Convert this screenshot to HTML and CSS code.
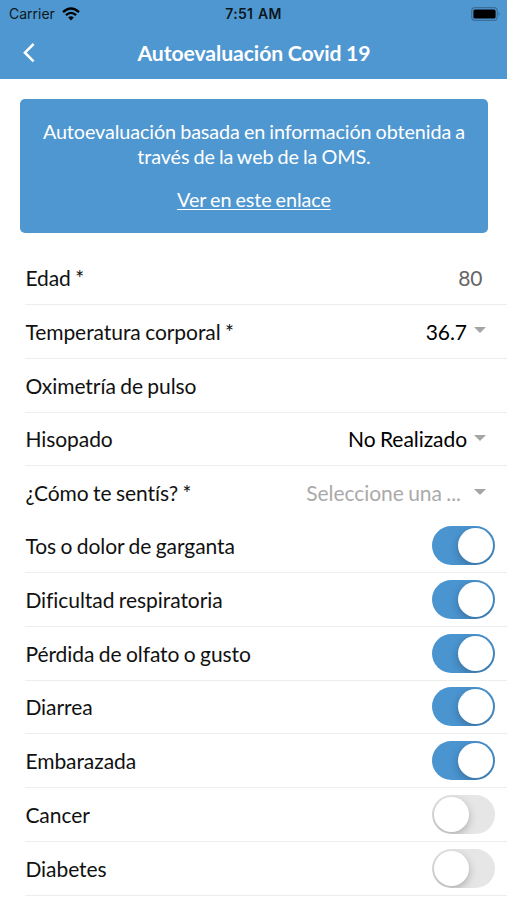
FILE: index.html
```html
<!DOCTYPE html>
<html lang="es">
<head>
<meta charset="UTF-8" />
<meta name="viewport" content="width=device-width, initial-scale=1" />
<title>Autoevaluación Covid 19</title>
<link rel="stylesheet" href="styles.css">
</head>
<body>
<header>
  <div class="status-bar">
    <div class="carrier">
      <span>Carrier</span>
      <svg class="wifi" viewBox="0 0 18 14" width="18" height="14">
        <path d="M1 5.2 Q9 -2.2 17 5.2" fill="none" stroke="#000" stroke-width="2.4" />
        <path d="M3.9 8.2 Q9 3.6 14.1 8.2" fill="none" stroke="#000" stroke-width="2.3" />
        <path d="M6.2 10.4 Q9 8 11.8 10.4 L9 13.4 Z" fill="#000" />
      </svg>
    </div>
    <span class="time">7:51 AM</span>
    <svg class="battery" viewBox="0 0 30 14" width="30" height="14">
      <rect x="0.7" y="0.7" width="25.6" height="12.6" rx="3.4" fill="none" stroke="#3b6f9b" stroke-width="1.2" />
      <rect x="2.4" y="2.4" width="22.2" height="9.2" rx="1.6" fill="#000" />
      <path d="M27.6 5 Q30.2 7 27.6 9 Z" fill="#3b6f9b" />
    </svg>
  </div>
  <div class="toolbar">
    <svg class="back" viewBox="0 0 14 22" width="14" height="22">
      <path d="M11.6 2 L2.9 10.7 L11.6 19.4" fill="none" stroke="#fff" stroke-width="2.5" />
    </svg>
    <h1>Autoevaluación Covid 19</h1>
  </div>
</header>

<main>
  <section class="info">
    <p>Autoevaluación basada en información obtenida a través de la web de la OMS.</p>
    <a href="#">Ver en este enlace</a>
  </section>

  <div class="list">
    <div class="item">
      <label>Edad *</label>
      <span class="value input">80</span>
    </div>
    <div class="item">
      <label>Temperatura corporal *</label>
      <span class="value select">36.7</span>
    </div>
    <div class="item">
      <label>Oximetría de pulso</label>
    </div>
    <div class="item">
      <label>Hisopado</label>
      <span class="value select">No Realizado</span>
    </div>
    <div class="item last">
      <label>¿Cómo te sentís? *</label>
      <span class="value select placeholder">Seleccione una ...</span>
    </div>
    <div class="item">
      <label>Tos o dolor de garganta</label>
      <span class="toggle on"></span>
    </div>
    <div class="item">
      <label>Dificultad respiratoria</label>
      <span class="toggle on"></span>
    </div>
    <div class="item">
      <label>Pérdida de olfato o gusto</label>
      <span class="toggle on"></span>
    </div>
    <div class="item">
      <label>Diarrea</label>
      <span class="toggle on"></span>
    </div>
    <div class="item">
      <label>Embarazada</label>
      <span class="toggle on"></span>
    </div>
    <div class="item">
      <label>Cancer</label>
      <span class="toggle"></span>
    </div>
    <div class="item">
      <label>Diabetes</label>
      <span class="toggle"></span>
    </div>
  </div>
</main>
</body>
</html>
```

FILE: styles.css
```css
* {
  box-sizing: border-box;
}
body {
  margin: 0;
  height: 900px;
  overflow: hidden;
  background: #fff;
  font-family: Lato, sans-serif;
  color: #111;
}

/* Header */
header {
  height: 79px;
  background: #4f97d0;
}
.status-bar {
  display: grid;
  grid-template-columns: 1fr auto 1fr;
  align-items: center;
  height: 27px;
  padding: 0 6px 0 9px;
  font-family: Inter, sans-serif;
  font-size: 14px;
  color: #0c1720;
}
.carrier {
  display: flex;
  align-items: center;
  gap: 7px;
}
.time {
  margin-right: 3px;
  font-weight: 600;
  letter-spacing: 0.3px;
  word-spacing: 1px;
}
.battery {
  justify-self: end;
}
.toolbar {
  display: flex;
  align-items: center;
  height: 52px;
  padding: 0 22px;
}
.toolbar h1 {
  flex: 1;
  margin: 0 13px 0 0;
  text-align: center;
  font-size: 21.2px;
  font-weight: 700;
  letter-spacing: -0.08px;
  word-spacing: -0.5px;
  color: #fff;
}

/* Info card */
.info {
  height: 134.5px;
  margin: 19.5px 19.5px 0 20.4px;
  padding: 20.5px 20px 0;
  border-radius: 5px;
  background: #4f97d0;
  color: #fff;
  text-align: center;
  font-size: 19.8px;
  line-height: 25px;
  letter-spacing: -0.09px;
  word-spacing: -0.9px;
}
.info p {
  margin: 0 0 18px;
}
.info a {
  color: #fff;
  text-underline-offset: 2px;
}

/* List */
.list {
  padding: 18.3px 0 0 25.4px;
}
.item {
  display: flex;
  align-items: center;
  justify-content: space-between;
  height: 53.75px;
  padding-right: 12px;
  border-bottom: 1.5px solid #ededed;
  font-size: 21px;
  letter-spacing: -0.06px;
  word-spacing: -0.9px;
}
.item.last {
  height: 53px;
  border-bottom: none;
}
.value {
  color: #000;
}
.value.input {
  padding-right: 12.5px;
  color: #666;
}
.value.select {
  display: flex;
  align-items: center;
  gap: 7px;
  padding-right: 9px;
}
.value.select::after {
  content: "";
  margin-top: -2px;
  border: 6px solid transparent;
  border-top: 6px solid #a5a5a5;
  border-bottom: none;
}
.value.placeholder {
  gap: 13px;
  color: #aaa;
}

/* Toggle */
.toggle {
  display: flex;
  width: 63px;
  height: 39px;
  padding: 2px;
  border-radius: 20px;
  background: #e6e6e6;
  overflow: hidden;
}
.toggle::after {
  content: "";
  width: 35px;
  height: 35px;
  border-radius: 50%;
  background: #fff;
  box-shadow: 0 3px 8px rgba(0, 0, 0, 0.25);
}
.toggle.on {
  justify-content: flex-end;
  background: #4a94d0;
}
```
